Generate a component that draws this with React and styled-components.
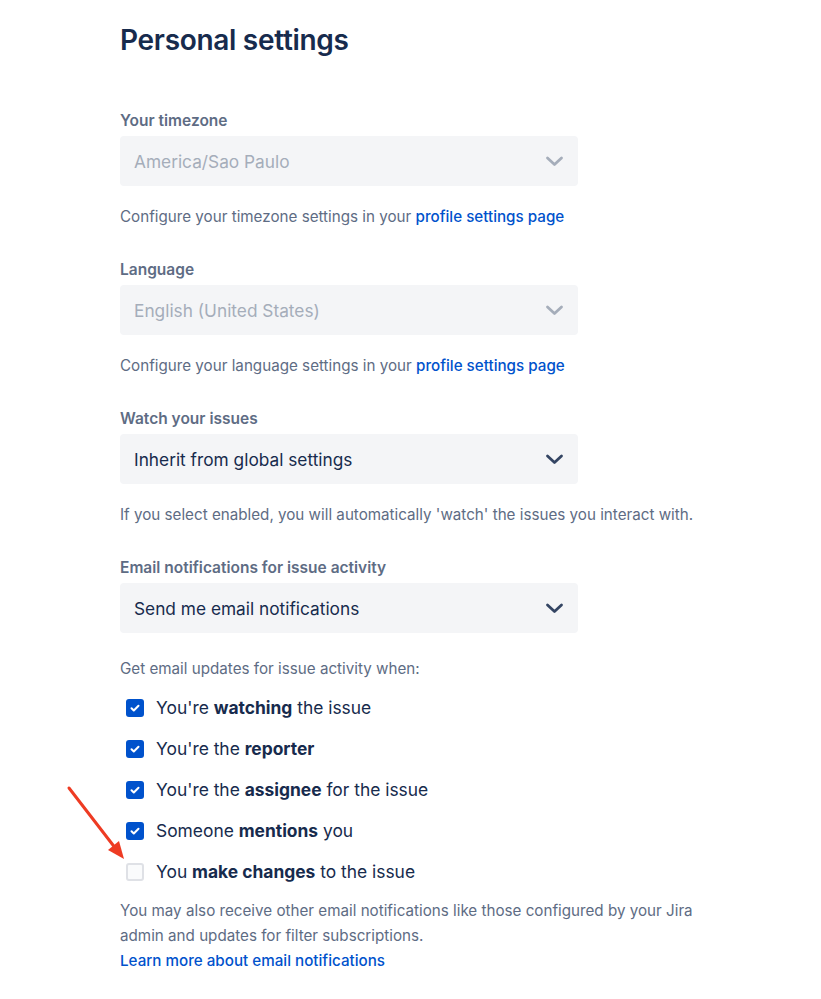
import React from "react";
import styled, { createGlobalStyle } from "styled-components";

const Global = createGlobalStyle`
  html, body { margin: 0; padding: 0; background: #fff; }
  body { font-family: Inter, "Noto Sans", sans-serif; color: #172B4D; }
`;

const Page = styled.div`
  position: relative;
  width: 821px;
  height: 999px;
  padding: 20px 0 0 120px;
  box-sizing: border-box;
  overflow: hidden;
`;

const Title = styled.h1`
  margin: 0 0 51px;
  font-size: 28px;
  font-weight: 600;
  line-height: 40px;
  letter-spacing: -0.3px;
  color: #172B4D;
`;

const Section = styled.section`
  display: flex;
  flex-direction: column;
  width: 458px;
  margin-bottom: ${p => p.$mb || 32}px;
`;

const Label = styled.label`
  font-size: 15.5px;
  font-weight: 600;
  line-height: 20px;
  color: #5E6C84;
  margin-bottom: 5px;
`;

const Select = styled.div`
  display: flex;
  align-items: center;
  justify-content: space-between;
  height: 50px;
  padding: 0 12px 0 14px;
  box-sizing: border-box;
  background: #F4F5F7;
  border-radius: 4px;
  font-size: 17.3px;
  color: ${p => (p.$disabled ? "#A5ADBA" : "#172B4D")};
`;

const Helper = styled.p`
  margin: 20px 0 0;
  font-size: 15.2px;
  line-height: 22px;
  color: #5E6C84;
  width: 640px;
`;

const Link = styled.a`
  color: #0052CC;
  text-decoration: none;
  font-weight: 500;
`;

const Intro = styled.p`
  margin: 0 0 16px;
  font-size: 15.2px;
  line-height: 22px;
  color: #5E6C84;
`;

const List = styled.div`
  display: flex;
  flex-direction: column;
  gap: 17px;
  padding-left: 6px;
`;

const Row = styled.div`
  display: flex;
  align-items: center;
  gap: 12px;
  font-size: 17.4px;
  line-height: 24px;
  color: #172B4D;
  b { font-weight: 700; }
`;

const Box = styled.span`
  flex: none;
  width: 18px;
  height: 18px;
  box-sizing: border-box;
  border-radius: 3px;
  display: flex;
  align-items: center;
  justify-content: center;
  background: ${p => (p.$checked ? "#0052CC" : "#FAFBFC")};
  border: ${p => (p.$checked ? "none" : "2px solid #DFE1E6")};
`;

const Footer = styled.p`
  margin: 14px 0 0;
  font-size: 15.2px;
  line-height: 25px;
  color: #5E6C84;
  width: 590px;
`;

const Arrow = styled.svg`
  position: absolute;
  left: 64px;
  top: 782px;
`;

const Chevron = ({ color }) => (
  <svg width="24" height="24" viewBox="0 0 24 24">
    <path d="M5.5 9l7 6.5 7-6.5" fill="none" stroke={color} strokeWidth="2.8" strokeLinecap="round" strokeLinejoin="round" />
  </svg>
);

const Check = ({ checked }) => (
  <Box $checked={checked}>
    {checked && (
      <svg width="12" height="12" viewBox="0 0 12 12">
        <path d="M2.5 6.2l2.3 2.3 4.7-4.8" fill="none" stroke="#fff" strokeWidth="2" strokeLinecap="round" strokeLinejoin="round" />
      </svg>
    )}
  </Box>
);

const items = [
  [true, <>You're <b>watching</b> the issue</>],
  [true, <>You're the <b>reporter</b></>],
  [true, <>You're the <b>assignee</b> for the issue</>],
  [true, <>Someone <b>mentions</b> you</>],
  [false, <>You <b>make changes</b> to the issue</>],
];

export default function App() {
  return (
    <>
      <Global />
      <Page>
        <Title>Personal settings</Title>
        <Section>
          <Label>Your timezone</Label>
          <Select $disabled>America/Sao Paulo<Chevron color="#A5ADBA" /></Select>
          <Helper>Configure your timezone settings in your <Link>profile settings page</Link></Helper>
        </Section>
        <Section>
          <Label>Language</Label>
          <Select $disabled>English (United States)<Chevron color="#A5ADBA" /></Select>
          <Helper>Configure your language settings in your <Link>profile settings page</Link></Helper>
        </Section>
        <Section>
          <Label>Watch your issues</Label>
          <Select>Inherit from global settings<Chevron color="#344563" /></Select>
          <Helper>If you select enabled, you will automatically 'watch' the issues you interact with.</Helper>
        </Section>
        <Section $mb={25}>
          <Label>Email notifications for issue activity</Label>
          <Select>Send me email notifications<Chevron color="#344563" /></Select>
        </Section>
        <Intro>Get email updates for issue activity when:</Intro>
        <List>
          {items.map(([c, t], i) => (
            <Row key={i}><Check checked={c} /><span>{t}</span></Row>
          ))}
        </List>
        <Footer>
          You may also receive other email notifications like those configured by your Jira admin and updates for filter subscriptions.
          <br />
          <Link>Learn more about email notifications</Link>
        </Footer>
        <Arrow width="70" height="85" viewBox="0 0 70 85">
          <line x1="5" y1="6" x2="52" y2="67" stroke="#EE3B23" strokeWidth="3" strokeLinecap="round" />
          <polygon points="60,77 44,68 55,59" fill="#EE3B23" />
        </Arrow>
      </Page>
    </>
  );
}
